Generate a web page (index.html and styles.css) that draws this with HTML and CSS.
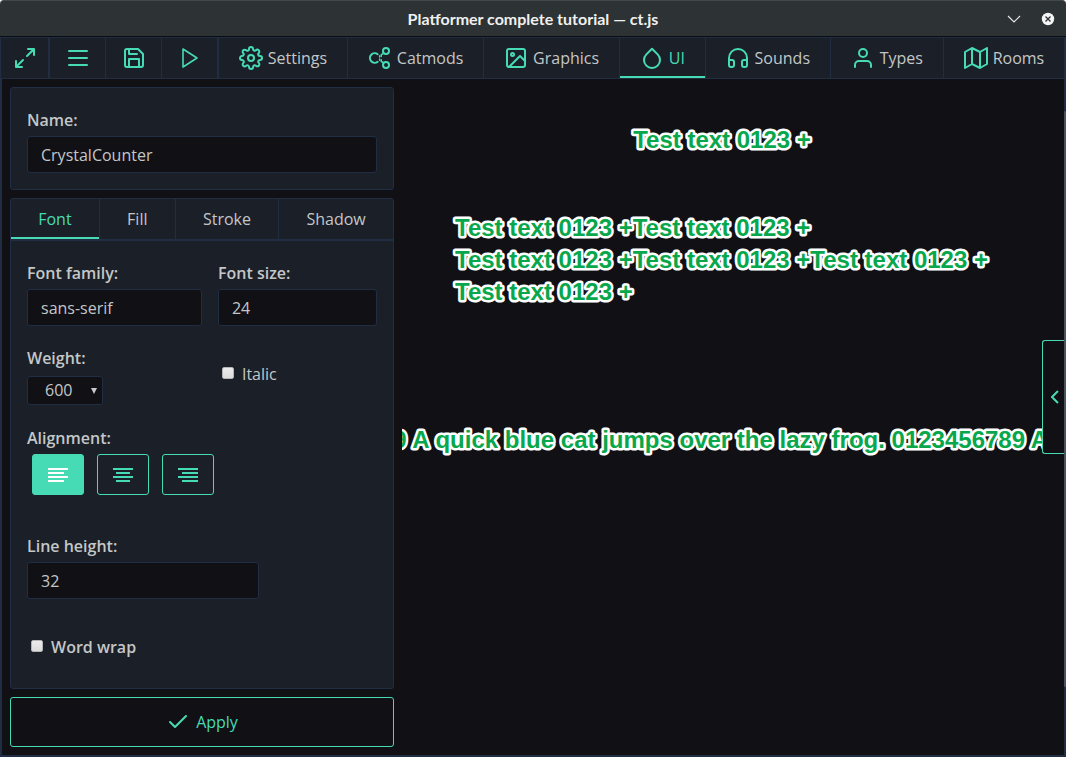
FILE: index.html
```html
<!DOCTYPE html>
<html lang="en">
<head>
<meta charset="utf-8">
<meta name="viewport" content="width=device-width, initial-scale=1">
<title>Platformer complete tutorial — ct.js</title>
<link rel="stylesheet" href="styles.css">
</head>
<body>
<header class="titlebar">
  <h1 class="titlebar-text">Platformer complete tutorial — ct.js</h1>
  <div class="window-controls">
    <button class="window-button" type="button" aria-label="Minimize"><svg width="14" height="14" viewBox="0 0 14 14" fill="none" stroke="#e4e5e5" stroke-width="1.2"><path d="M1 4l6 6 6-6"/></svg></button>
    <button class="window-button" type="button" aria-label="Close"><svg width="14" height="14" viewBox="0 0 14 14"><circle cx="7" cy="7" r="6.2" fill="#f5f5f5"/><path d="M4.5 4.5l5 5m0-5l-5 5" stroke="#2d3234" stroke-width="1.3"/></svg></button>
  </div>
</header>

<nav class="toolbar">
  <button class="tool tool-first" type="button" aria-label="Fullscreen"><svg class="icon" viewBox="0 0 24 24"><path d="M15 3h6v6M9 21H3v-6M21 3l-7 7M3 21l7-7"/></svg></button>
  <button class="tool" type="button" aria-label="Menu"><svg class="icon" viewBox="0 0 24 24"><path d="M3 5h18M3 12h18M3 19h18"/></svg></button>
  <button class="tool" type="button" aria-label="Save"><svg class="icon" viewBox="0 0 24 24"><path d="M19 21H5a2 2 0 0 1-2-2V5a2 2 0 0 1 2-2h11l5 5v11a2 2 0 0 1-2 2z"/><path d="M17 21v-8H7v8M7 3v5h8"/></svg></button>
  <button class="tool" type="button" aria-label="Run"><svg class="icon icon-thin" viewBox="0 0 24 24"><path d="M5 3l14 9-14 9z"/></svg></button>
  <button class="section section-first" type="button"><svg class="icon" viewBox="0 0 24 24"><circle cx="12" cy="12" r="3"/><path d="M19.4 15a1.65 1.65 0 0 0 .33 1.82l.06.06a2 2 0 0 1 0 2.83 2 2 0 0 1-2.83 0l-.06-.06a1.65 1.65 0 0 0-1.82-.33 1.65 1.65 0 0 0-1 1.51V21a2 2 0 0 1-2 2 2 2 0 0 1-2-2v-.09A1.65 1.65 0 0 0 9 19.4a1.65 1.65 0 0 0-1.82.33l-.06.06a2 2 0 0 1-2.83 0 2 2 0 0 1 0-2.83l.06-.06a1.65 1.65 0 0 0 .33-1.82 1.65 1.65 0 0 0-1.51-1H3a2 2 0 0 1-2-2 2 2 0 0 1 2-2h.09A1.65 1.65 0 0 0 4.6 9a1.65 1.65 0 0 0-.33-1.82l-.06-.06a2 2 0 0 1 0-2.83 2 2 0 0 1 2.83 0l.06.06a1.65 1.65 0 0 0 1.82.33H9a1.65 1.65 0 0 0 1-1.51V3a2 2 0 0 1 2-2 2 2 0 0 1 2 2v.09a1.65 1.65 0 0 0 1 1.51 1.65 1.65 0 0 0 1.82-.33l.06-.06a2 2 0 0 1 2.83 0 2 2 0 0 1 0 2.83l-.06.06a1.65 1.65 0 0 0-.33 1.82V9a1.65 1.65 0 0 0 1.51 1H21a2 2 0 0 1 2 2 2 2 0 0 1-2 2h-.09a1.65 1.65 0 0 0-1.51 1z"/></svg>Settings</button>
  <button class="section" type="button"><svg class="icon" viewBox="0 0 24 24"><path d="M9.7 8.2A4.8 4.8 0 1 0 9.7 15.8"/><path d="M11.6 9.8v4.6" stroke-width="1.4" stroke-dasharray="1.2 2"/><circle cx="18" cy="5" r="3"/><circle cx="18" cy="19" r="3"/><path d="M15.6 7.2l-2.4 1.6v1.6M13.2 13.8v1.6l2.4 1.6" stroke-width="1.6"/></svg>Catmods</button>
  <button class="section" type="button"><svg class="icon" viewBox="0 0 24 24"><rect x="3" y="3" width="18" height="18" rx="2"/><circle cx="8.5" cy="8.5" r="1.5"/><path d="M21 15l-5-5L5 21"/></svg>Graphics</button>
  <button class="section active" type="button"><svg class="icon" viewBox="0 0 24 24"><path d="M12 2.69l5.66 5.66a8 8 0 1 1-11.31 0z"/></svg>UI</button>
  <button class="section" type="button"><svg class="icon" viewBox="0 0 24 24"><path d="M3 18v-6a9 9 0 0 1 18 0v6"/><path d="M21 19a2 2 0 0 1-2 2h-1a2 2 0 0 1-2-2v-3a2 2 0 0 1 2-2h3zM3 19a2 2 0 0 0 2 2h1a2 2 0 0 0 2-2v-3a2 2 0 0 0-2-2H3z"/></svg>Sounds</button>
  <button class="section" type="button"><svg class="icon" viewBox="0 0 24 24"><path d="M20 21v-2a4 4 0 0 0-4-4H8a4 4 0 0 0-4 4v2"/><circle cx="12" cy="7" r="4"/></svg>Types</button>
  <button class="section" type="button"><svg class="icon" viewBox="0 0 24 24"><path d="M1 6v16l7-4 8 4 7-4V2l-7 4-8-4-7 4zM8 2v16M16 6v16"/></svg>Rooms</button>
</nav>

<main class="workspace">
  <form class="editor">
    <section class="card fields">
      <div class="field">
        <label class="label" for="style-name">Name:</label>
        <input class="textbox" id="style-name" type="text" value="CrystalCounter">
      </div>
    </section>

    <section class="card settings">
      <div class="tabs" role="tablist">
        <button class="tab active" type="button" role="tab" aria-selected="true">Font</button>
        <button class="tab" type="button" role="tab" aria-selected="false">Fill</button>
        <button class="tab" type="button" role="tab" aria-selected="false">Stroke</button>
        <button class="tab" type="button" role="tab" aria-selected="false">Shadow</button>
      </div>
      <div class="fields">
        <div class="field-grid">
          <div class="field">
            <label class="label" for="font-family">Font family:</label>
            <input class="textbox" id="font-family" type="text" value="sans-serif">
          </div>
          <div class="field">
            <label class="label" for="font-size">Font size:</label>
            <input class="textbox" id="font-size" type="text" inputmode="numeric" value="24">
          </div>
          <div class="field">
            <label class="label" for="font-weight">Weight:</label>
            <span class="select-wrap">
              <select class="select" id="font-weight"><option>400</option><option selected>600</option><option>800</option></select>
              <svg class="select-arrow" width="6" height="6" viewBox="0 0 6 6" aria-hidden="true"><path d="M0 0h6L3 6z" fill="#c6cacb"/></svg>
            </span>
          </div>
          <label class="check check-italic"><input class="checkbox" type="checkbox">Italic</label>
        </div>
        <div class="field">
          <span class="label" id="align-label">Alignment:</span>
          <div class="align-group" role="group" aria-labelledby="align-label">
            <button class="align active" type="button" aria-label="Left"><svg width="20" height="14" viewBox="0 0 20 14"><path d="M0 1h20M0 5h16M0 9h20M0 13h16" stroke="currentColor" stroke-width="2"/></svg></button>
            <button class="align" type="button" aria-label="Center"><svg width="20" height="14" viewBox="0 0 20 14"><path d="M0 1h20M3 5h14M0 9h20M3 13h14" stroke="currentColor" stroke-width="2"/></svg></button>
            <button class="align" type="button" aria-label="Right"><svg width="20" height="14" viewBox="0 0 20 14"><path d="M0 1h20M4 5h16M0 9h20M4 13h16" stroke="currentColor" stroke-width="2"/></svg></button>
          </div>
        </div>
        <div class="field field-spaced">
          <label class="label" for="line-height">Line height:</label>
          <input class="textbox textbox-short" id="line-height" type="text" inputmode="numeric" value="32">
        </div>
        <label class="check check-wrap"><input class="checkbox" type="checkbox">Word wrap</label>
      </div>
    </section>

    <button class="apply" type="button"><svg class="icon" viewBox="0 0 24 24"><path d="M20 6L9 17l-5-5"/></svg>Apply</button>
  </form>

  <section class="preview" aria-label="Preview">
    <svg class="canvas">
      <svg class="origin" x="50%">
        <text class="sample centered" y="61">Test text 0123 +</text>
        <text class="sample"><tspan x="-267" y="149">Test text 0123 +Test text 0123 +</tspan><tspan x="-267" y="181">Test text 0123 +Test text 0123 +Test text 0123 +</tspan><tspan x="-267" y="213">Test text 0123 +</tspan></text>
        <text class="sample centered" y="361">A quick blue cat jumps over the lazy frog. 0123456789 A quick blue cat jumps over the lazy frog. 0123456789 A quick blue cat jumps over the lazy frog. 0123456789&#160;</text>
      </svg>
    </svg>
  </section>

  <button class="drawer" type="button" aria-label="Open side panel"><svg width="8" height="14" viewBox="0 0 8 14" fill="none" stroke="currentColor" stroke-width="2"><path d="M7 1L1 7l6 6"/></svg></button>
  <span class="scroll-thumb" aria-hidden="true"></span>
</main>
</body>
</html>
```
FILE: styles.css
```css
:root {
  --bg: #111015;
  --panel: #1b1f27;
  --line: #202d43;
  --accent: #46dbb5;
  --text: #c3c7c8;
}

* {
  box-sizing: border-box;
}

html {
  height: 100%;
  background: #fff;
}

body {
  display: flex;
  flex-direction: column;
  min-height: 100%;
  margin: 0;
  color: var(--text);
  font: 16px/24px "Open Sans", "Noto Sans", sans-serif;
}

button,
input,
select {
  margin: 0;
  color: inherit;
  font: inherit;
}

.icon {
  flex: none;
  width: 24px;
  height: 24px;
  fill: none;
  stroke: var(--accent);
  stroke-width: 2;
  stroke-linecap: round;
  stroke-linejoin: round;
}

.icon-thin {
  stroke-width: 1.6;
}

/* Window frame */
.titlebar {
  display: grid;
  grid-template-columns: 1fr auto 1fr;
  align-items: center;
  height: 37px;
  border-top: 1px solid #43494b;
  border-bottom: 1px solid #0b0c0d;
  border-radius: 4px 4px 0 0;
  background: #2d3234;
}

.titlebar-text {
  grid-column: 2;
  margin: 0;
  color: #f0f0ef;
  font: bold 16px/24px Lato, sans-serif;
}

.window-controls {
  display: flex;
  justify-content: flex-end;
  gap: 20px;
  padding-right: 11px;
}

.window-button {
  display: flex;
  padding: 0;
  border: 0;
  background: none;
}

/* Main toolbar */
.toolbar {
  display: flex;
  height: 42px;
  border: 1px solid var(--line);
  background: var(--panel);
}

.tool,
.section {
  display: flex;
  align-items: center;
  justify-content: center;
  padding: 0;
  border: 0;
  border-right: 1px solid var(--line);
  background: none;
}

.tool {
  flex: none;
  width: 56px;
}

.tool-first {
  width: 49px;
  border-right-width: 2px;
}

.section {
  flex: 1 1 auto;
  gap: 5px;
  padding: 0 18px;
}

.section-first {
  border-left: 1px solid var(--line);
}

.section.active,
.tab.active {
  color: var(--accent);
  box-shadow: inset 0 -2px var(--accent);
}

/* Workspace */
.workspace {
  position: relative;
  display: flex;
  flex: 1;
  gap: 8px;
  padding: 8px;
  border: 2px solid var(--line);
  border-top: 0;
  background: var(--bg);
}

.editor {
  display: flex;
  flex: 0 0 384px;
  flex-direction: column;
  gap: 8px;
}

.card {
  border: 1px solid var(--line);
  border-radius: 3px;
  background: var(--panel);
}

.settings {
  flex: 1;
}

.fields {
  padding: 20px 16px 16px;
}

.field {
  display: flex;
  flex-direction: column;
  align-items: flex-start;
  gap: 4px;
}

.field-grid {
  display: grid;
  grid-template-columns: 11fr 10fr;
  gap: 20px 16px;
  margin-bottom: 21px;
}

.field-spaced {
  margin-top: 39px;
}

.label,
.check-wrap {
  font-weight: 600;
}

.textbox {
  width: 100%;
  height: 37px;
  padding: 0 13px;
  border: 1px solid var(--line);
  border-radius: 3px;
  background: var(--bg);
}

.textbox-short {
  width: 232px;
}

.tabs {
  display: flex;
  height: 42px;
  border-bottom: 2px solid var(--line);
}

.tab {
  flex: 1 1 auto;
  padding: 0 26px;
  border: 0;
  border-right: 1px solid var(--line);
  background: none;
}

.tab:last-child {
  border-right: 0;
}

.select-wrap {
  display: grid;
  align-items: center;
  width: 76px;
  margin-top: 2px;
}

.select {
  grid-area: 1 / 1;
  width: 100%;
  height: 29px;
  padding: 0 17px 2px;
  border: 1px solid var(--line);
  border-radius: 3px;
  background: var(--bg);
  appearance: none;
}

.select-arrow {
  grid-area: 1 / 1;
  justify-self: end;
  margin-right: 6px;
  pointer-events: none;
}

.check {
  display: flex;
  align-items: center;
  gap: 8px;
  padding-left: 4px;
}

.check-italic {
  align-self: start;
  padding-top: 16px;
}

.check-wrap {
  margin-top: 36px;
}

.checkbox {
  width: 12px;
  height: 12px;
  margin-bottom: 2px;
  border: 1px solid #b4b4b4;
  border-radius: 2px;
  background: linear-gradient(#ececec, #dcdcdc);
  appearance: none;
}

.checkbox:checked {
  background: var(--accent);
}

.align-group {
  display: flex;
  gap: 13px;
  padding-left: 5px;
}

.align {
  display: flex;
  align-items: center;
  justify-content: center;
  width: 52px;
  height: 41px;
  padding: 0;
  border: 1px solid var(--accent);
  border-radius: 3px;
  background: none;
  color: var(--accent);
}

.align.active {
  background: var(--accent);
  color: #fff;
}

.apply {
  display: flex;
  align-items: center;
  justify-content: center;
  gap: 6px;
  height: 50px;
  border: 1px solid var(--accent);
  border-radius: 3px;
  background: none;
  color: var(--accent);
}

/* Text preview */
.preview {
  flex: 1;
  min-width: 0;
  margin-right: 14px;
}

.canvas {
  display: block;
  width: 100%;
  height: 400px;
  overflow: hidden;
}

.origin {
  overflow: visible;
}

.sample {
  fill: #09a74c;
  stroke: #fff;
  stroke-width: 5px;
  stroke-linejoin: round;
  paint-order: stroke fill;
  font: bold 24px/32px "Liberation Sans", Arial, sans-serif;
}

.centered {
  text-anchor: middle;
}

.drawer {
  position: absolute;
  top: 261px;
  right: -2px;
  display: flex;
  align-items: center;
  justify-content: center;
  width: 24px;
  height: 114px;
  padding: 0;
  border: 1px solid var(--accent);
  border-right: 0;
  border-radius: 3px 0 0 3px;
  background: var(--bg);
  color: var(--accent);
}

.scroll-thumb {
  position: absolute;
  top: 32px;
  right: -2px;
  bottom: 68px;
  width: 2px;
  border-radius: 2px;
  background: #4b5261;
}
```
